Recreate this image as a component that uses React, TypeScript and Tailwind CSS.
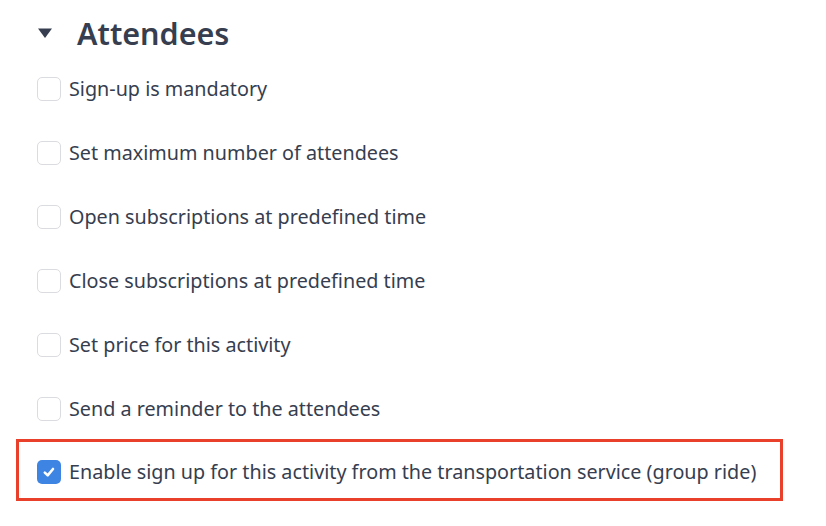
import React from "react";

const rows = [
  "Sign-up is mandatory",
  "Set maximum number of attendees",
  "Open subscriptions at predefined time",
  "Close subscriptions at predefined time",
  "Set price for this activity",
  "Send a reminder to the attendees",
];

function Box({ checked }: { checked?: boolean }) {
  if (checked) {
    return (
      <span className="flex h-[24px] w-[24px] shrink-0 items-center justify-center rounded-[5px] bg-[#3e84e2]">
        <svg width="14" height="14" viewBox="0 0 14 14">
          <path d="M2.8 7.6 L5.7 10.3 L11 4" fill="none" stroke="#fff" strokeWidth="2.6" strokeLinecap="round" strokeLinejoin="round" />
        </svg>
      </span>
    );
  }
  return <span className="h-[24px] w-[24px] shrink-0 rounded-[5px] border border-[#dadce0] bg-white" />;
}

export default function App() {
  return (
    <div
      className="h-[526px] w-[826px] bg-white text-[#363e4f]"
      style={{ fontFamily: '"Noto Sans", "Open Sans", sans-serif' }}
    >
      <div className="flex h-[57px] items-center pl-[37px] pt-[10px]">
        <svg width="16" height="12" viewBox="0 0 16 12" className="mt-[-2px]">
          <path d="M1 1.5 L15 1.5 L8 11 Z" fill="#363e4f" />
        </svg>
        <span className="ml-[24px] text-[30.5px] font-semibold leading-none">Attendees</span>
      </div>
      {rows.map((r) => (
        <div key={r} className="flex h-16 items-center pl-[37px]">
          <Box />
          <span className="ml-[8px] text-[19.75px]">{r}</span>
        </div>
      ))}
      <div className="ml-[16px] mt-[-2px] flex h-[62px] w-[767px] items-center border-[3px] border-[#e8402a] pl-[18px] pt-[4px]">
        <Box checked />
        <span className="ml-[8px] text-[19.75px]">
          Enable sign up for this activity from the transportation service (group ride)
        </span>
      </div>
    </div>
  );
}
